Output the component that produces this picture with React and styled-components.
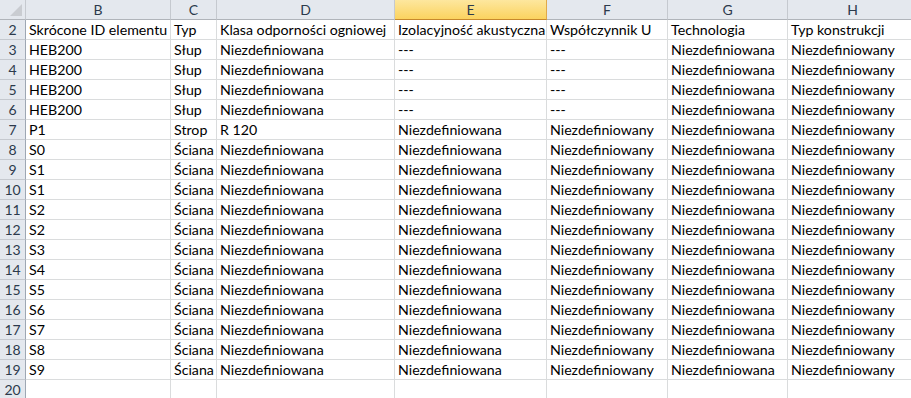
import React from "react";
import styled, { createGlobalStyle } from "styled-components";

const GlobalStyle = createGlobalStyle`
  html, body {
    margin: 0;
    padding: 0;
    background: #ffffff;
    overflow: hidden;
  }
`;

const columns = [
  { id: "B", width: 145 },
  { id: "C", width: 46 },
  { id: "D", width: 178 },
  { id: "E", width: 152, selected: true },
  { id: "F", width: 121 },
  { id: "G", width: 120 },
  { id: "H", width: 130 },
];

const undef = "Niezdefiniowana";
const undefM = "Niezdefiniowany";

const rows = [
  [2, ["Skrócone ID elementu", "Typ", "Klasa odporności ogniowej", "Izolacyjność akustyczna", "Współczynnik U", "Technologia", "Typ konstrukcji"]],
  [3, ["HEB200", "Słup", undef, "---", "---", undef, undefM]],
  [4, ["HEB200", "Słup", undef, "---", "---", undef, undefM]],
  [5, ["HEB200", "Słup", undef, "---", "---", undef, undefM]],
  [6, ["HEB200", "Słup", undef, "---", "---", undef, undefM]],
  [7, ["P1", "Strop", "R 120", undef, undefM, undef, undefM]],
  ...["S0", "S1", "S1", "S2", "S2", "S3", "S4", "S5", "S6", "S7", "S8", "S9"].map(
    (id, i) => [8 + i, [id, "Ściana", undef, undef, undefM, undef, undefM]]
  ),
  [20, ["", "", "", "", "", "", ""]],
];

const template = `26px ${columns.map((c) => c.width + "px").join(" ")}`;

const App = () => {
  return (
    <>
      <GlobalStyle />
      <Sheet $template={template}>
        <Corner>
          <CornerMark />
        </Corner>
        {columns.map((c) => (
          <ColHeader key={c.id} $selected={c.selected}>
            {c.id}
          </ColHeader>
        ))}
        {rows.map(([num, cells]) => (
          <React.Fragment key={num}>
            <RowHeader>{num}</RowHeader>
            {cells.map((text, i) => (
              <Cell key={i}>{text}</Cell>
            ))}
          </React.Fragment>
        ))}
      </Sheet>
    </>
  );
};

const Sheet = styled.div`
  display: grid;
  grid-template-columns: ${(p) => p.$template};
  grid-auto-rows: 20px;
  width: max-content;
  font-family: Lato, "Liberation Sans", sans-serif;
  font-size: 14.2px;
  color: #000;
`;

const Corner = styled.div`
  position: relative;
  background: #e4e8ee;
  border-right: 1px solid #c5c9cf;
  border-bottom: 1px solid #b0b4ba;
`;

const CornerMark = styled.div`
  position: absolute;
  right: 3px;
  bottom: 3px;
  width: 0;
  height: 0;
  border-left: 12px solid transparent;
  border-bottom: 12px solid #c9ccd1;
`;

const ColHeader = styled.div`
  display: flex;
  align-items: center;
  justify-content: center;
  background: ${(p) =>
    p.$selected
      ? "linear-gradient(#fde79e, #fbd35f)"
      : "#e4e8ee"};
  border-right: 1px solid ${(p) => (p.$selected ? "#e0a94a" : "#c5c9cf")};
  border-bottom: 1px solid ${(p) => (p.$selected ? "#c7892c" : "#b0b4ba")};
  color: #2c3a4c;
  font-size: 14px;
`;

const RowHeader = styled.div`
  display: flex;
  align-items: center;
  justify-content: center;
  background: #e4e8ee;
  border-right: 1px solid #9ea7b3;
  border-bottom: 1px solid #c5c9cf;
  color: #2c3a4c;
  font-size: 14px;
`;

const Cell = styled.div`
  padding: 0 0 0 3px;
  line-height: 19px;
  border-right: 1px solid #dadcdd;
  border-bottom: 1px solid #dadcdd;
  white-space: nowrap;
  overflow: hidden;
`;

export default App;
